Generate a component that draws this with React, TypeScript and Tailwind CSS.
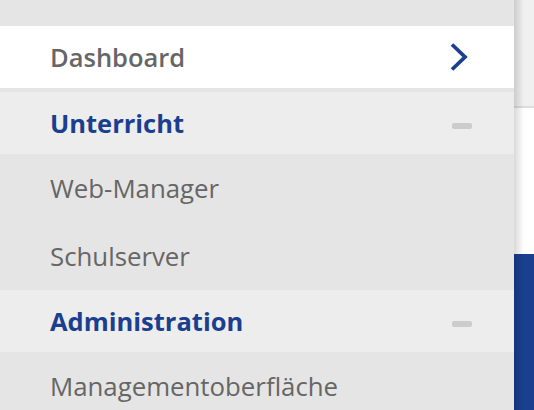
import React from "react";

function Minus() {
  return <div className="w-[20px] h-[6px] mt-[5px] rounded-[2px] bg-[#cccccc]" />;
}

function Chevron() {
  return (
    <svg width="20" height="28" viewBox="0 0 20 28" className="block">
      <path d="M3 1.5 L16 14 L3 26.5" fill="none" stroke="#1a3f8f" strokeWidth="3.8" strokeLinecap="butt" strokeLinejoin="miter" />
    </svg>
  );
}

export default function App() {
  const font = { fontFamily: '"Open Sans", sans-serif' };
  return (
    <div className="w-[534px] h-[410px] overflow-hidden flex bg-white" style={font}>
      <div className="w-[514px] shrink-0 flex flex-col bg-[#e5e5e5]">
        <div className="h-[26px] shrink-0 bg-[#e5e5e5]" />
        <div className="h-[62px] shrink-0 bg-white flex items-center justify-between pl-[50px] pr-[45px]">
          <span className="text-[25.5px] font-semibold text-[#666666]">Dashboard</span>
          <Chevron />
        </div>
        <div className="h-[4px] shrink-0 bg-[#e5e5e5]" />
        <div className="h-[62px] shrink-0 bg-[#ededed] flex items-center justify-between pl-[50px] pr-[42px]">
          <span className="text-[25.5px] font-bold text-[#1a3f8f]">Unterricht</span>
          <Minus />
        </div>
        <div className="h-[68px] shrink-0 flex items-center pl-[50px]">
          <span className="text-[25.8px] text-[#666666]">Web-Manager</span>
        </div>
        <div className="h-[68px] shrink-0 flex items-center pl-[50px]">
          <span className="text-[25.8px] text-[#666666]">Schulserver</span>
        </div>
        <div className="h-[62px] shrink-0 bg-[#ededed] flex items-center justify-between pl-[50px] pr-[42px]">
          <span className="text-[25.5px] font-bold text-[#1a3f8f]">Administration</span>
          <Minus />
        </div>
        <div className="h-[68px] shrink-0 flex items-center pl-[50px]">
          <span className="text-[25.8px] text-[#666666]">Managementoberfläche</span>
        </div>
      </div>
      <div className="relative flex-1 flex flex-col">
        <div className="h-[108px] shrink-0 bg-[#f0f0f0] border-b-2 border-[#dddddd]" />
        <div className="h-[146px] shrink-0 bg-white" />
        <div className="flex-1 bg-[#1a3f8f]" />
        <div className="absolute inset-y-0 left-0 w-[10px] bg-gradient-to-r from-[rgba(0,0,0,0.15)] to-transparent" />
      </div>
    </div>
  );
}
